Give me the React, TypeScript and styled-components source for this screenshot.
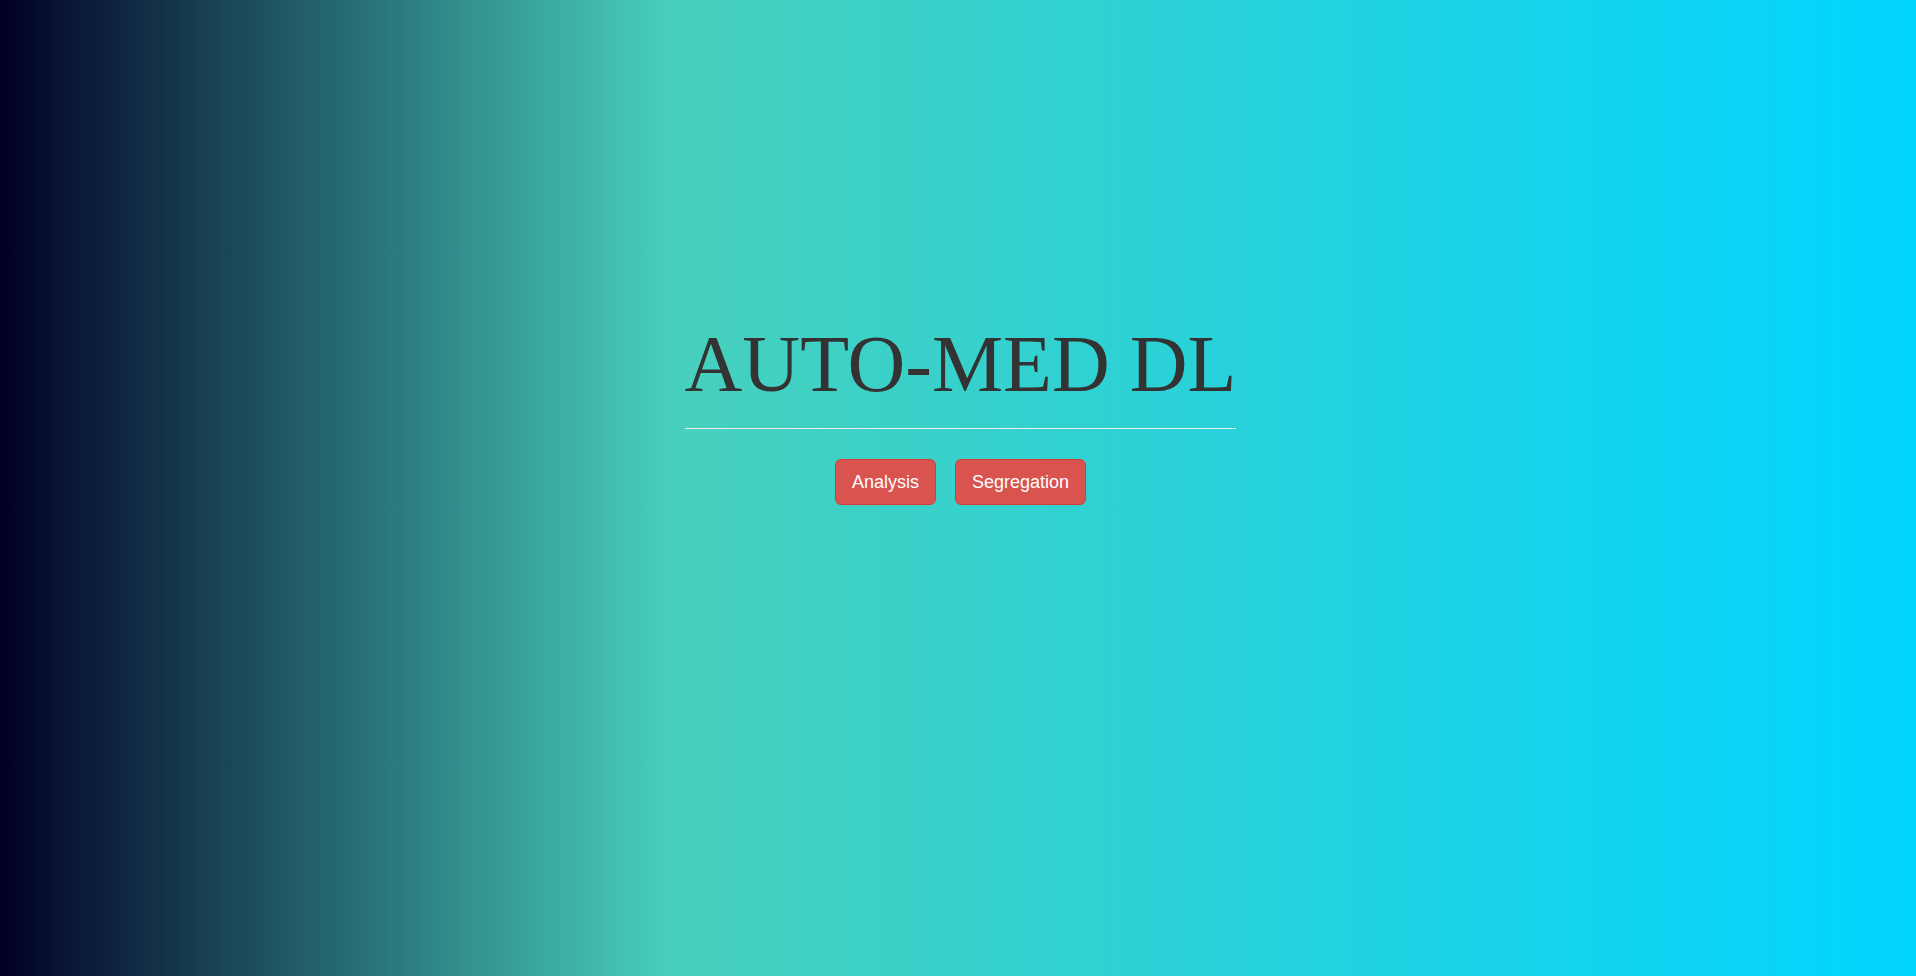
import React from 'react';
import styled, { createGlobalStyle } from 'styled-components';

const GlobalStyle = createGlobalStyle`
  html,
  body {
    margin: 0;
    height: 100%;
  }

  body {
    background: linear-gradient(
      90deg,
      rgba(2, 0, 36, 1) 0%,
      rgba(72, 208, 188, 1) 35%,
      rgba(0, 212, 255, 1) 100%
    );
    font-family: 'Liberation Sans', Arial, sans-serif;
    min-height: 100vh;
  }
`;

const Page = styled.main`
  align-items: center;
  box-sizing: border-box;
  display: flex;
  flex-direction: column;
  min-height: 100vh;
  padding: 320px 0 0 5px;
`;

const Hero = styled.div`
  display: flex;
  flex-direction: column;
  width: fit-content;
`;

const Title = styled.h1`
  color: #333;
  font-family: 'Liberation Serif', 'Times New Roman', serif;
  font-size: 80px;
  font-weight: 400;
  line-height: 88px;
  margin: 0;
  white-space: nowrap;
`;

const Divider = styled.hr`
  border: 0;
  border-top: 1px solid #eee;
  margin: 20px 0 30px;
  width: 100%;
`;

const Actions = styled.div`
  display: flex;
  gap: 19px;
  justify-content: center;
`;

const Button = styled.button`
  background-color: #d9534f;
  border: 1px solid #d43f3a;
  border-radius: 6px;
  color: #fff;
  cursor: pointer;
  font-family: 'Liberation Sans', Arial, sans-serif;
  font-size: 18px;
  height: 46px;
  line-height: 24px;
  padding: 10px 16px;

  &:hover {
    background-color: #c9302c;
    border-color: #ac2925;
  }
`;

export default function App(): JSX.Element {
  return (
    <>
      <GlobalStyle />
      <Page>
        <Hero>
          <Title>AUTO-MED DL</Title>
          <Divider />
        </Hero>
        <Actions>
          <Button>Analysis</Button>
          <Button>Segregation</Button>
        </Actions>
      </Page>
    </>
  );
}
